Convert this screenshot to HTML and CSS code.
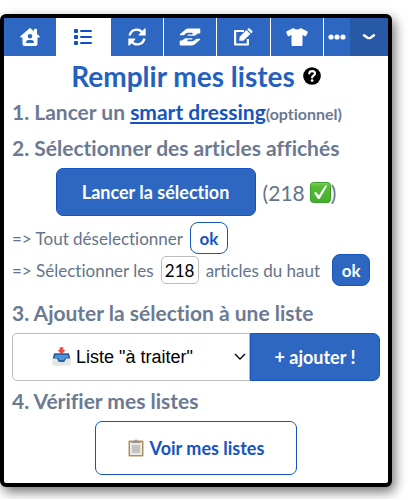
FILE: index.html
```html
<!DOCTYPE html>
<html lang="fr">
<head>
    <meta charset="UTF-8">
    <meta name="viewport" content="width=device-width, initial-scale=1.0">
    <title>Remplir mes listes</title>
    <link rel="stylesheet" href="styles.css">
</head>
<body>
    <main class="panel">

        <!-- Onglets -->
        <nav class="tabs">
            <button type="button" class="tab" aria-label="Accueil">
                <svg width="20" height="18" viewBox="0 0 20 18"><path fill="#fff" fill-rule="evenodd" d="M9.300 .4a1 1 0 0 1 1.400 0L14 3.200V1.500q0-.7.700-.7h1.600q.7 0 .7.700V6l2.600 2.300q.6.900-.5 1.200H17.500V16q0 2-2 2H4.500q-2 0-2-2V9.500H.900Q-.2 9.200.4 8.300zM10 6a2.300 2.300 0 1 0 0 4.600A2.300 2.300 0 0 0 10 6zM8.500 11.900Q6 12 6 15h8q0-3-2.500-3.100z"/></svg>
            </button>
            <button type="button" class="tab tab-active" aria-label="Listes">
                <svg width="20" height="16" viewBox="0 0 20 16"><g fill="#0d52c4"><rect x="1" y="0" width="4" height="4" rx="1"/><rect x="1" y="6" width="4" height="4" rx="1"/><rect x="1" y="12" width="4" height="4" rx="1"/><rect x="7" y="1" width="12" height="2" rx="1"/><rect x="7" y="7" width="12" height="2" rx="1"/><rect x="7" y="13" width="12" height="2" rx="1"/></g></svg>
            </button>
            <button type="button" class="tab" aria-label="Synchroniser">
                <svg width="18" height="18" viewBox="0 0 18 18"><g fill="none" stroke="#fff" stroke-width="2.400"><path d="M1.600 7.600C3 1.200 10.500-.4 14.400 4.600"/><path d="M16.400 10.400C15 16.800 7.500 18.400 3.600 13.400"/></g><path fill="#fff" d="M17.700.8v6.700h-6.700q-.8-.5-.2-1.100L16.500.6q.8-.5 1.200.2zM.3 17.200v-6.700H7q.8.500.2 1.100L1.500 17.400q-.8.500-1.200-.2z"/></svg>
            </button>
            <button type="button" class="tab" aria-label="Échanges">
                <svg width="22" height="18" viewBox="0 0 22 18"><path id="hand" fill="#fff" d="M20.500 5.600h-1.600l-2.200 1.700q-.6.400-1.500.4H9.200q-.7 0-.7-.6t.7-.6h3.600q.9-.1.900-.9t-.9-.9H8.800Q7.700 4.700 6.800 5.500L5 6.900q-.5.400-1.400.4H1.400Q.5 7.100.9 6.200L6.200 1.700Q7.700.5 9.600.5H20.500q.8 0 .8.800v3.500q0 .8-.8.800z"/><use href="#hand" transform="rotate(180 11 9)"/></svg>
            </button>
            <button type="button" class="tab" aria-label="Modifier">
                <svg width="20" height="18" viewBox="0 0 20 18"><path fill="none" stroke="#fff" stroke-width="2.200" stroke-linejoin="round" d="M11 3H2.100v13.500h12.800V11"/><path fill="#fff" d="M6.200 12.800l.5-4L13.400 2.100l3.900 3.900-6.900 6.700zM14.300 1.300l.8-.8q.8-.7 1.600 0l2.500 2.500q.7.800 0 1.600l-.9.800z"/></svg>
            </button>
            <button type="button" class="tab" aria-label="Articles">
                <svg width="22" height="18" viewBox="0 0 22 18"><path fill="#fff" d="M7.300 0q3.700 3.200 7.400 0l6.800 3.400q.5.300.3.900l-1.700 3.600q-.4.600-1 .3l-2.600-1.100V17q0 1-1 1h-9q-1 0-1-1V7.100L2.900 8.200q-.6.300-1-.3L.2 4.300q-.2-.6.300-.9z"/></svg>
            </button>
            <button type="button" class="tab tab-more" aria-label="Plus">
                <svg width="18" height="6" viewBox="0 0 18 6"><g fill="#fff"><circle cx="3" cy="3" r="2.600"/><circle cx="9" cy="3" r="2.600"/><circle cx="15" cy="3" r="2.600"/></g></svg>
            </button>
            <button type="button" class="tab tab-toggle" aria-label="Replier">
                <svg width="14" height="6" viewBox="0 0 14 6"><path fill="none" stroke="#fff" stroke-width="2.400" stroke-linecap="round" stroke-linejoin="round" d="M2 1.300l3.500 2.500q1.500.6 3 0L12 1.300"/></svg>
            </button>
        </nav>

        <div class="content">
            <h1 class="title">
                Remplir mes listes
                <svg width="18" height="18" viewBox="0 0 18 18"><circle cx="9" cy="9" r="8.800" fill="#000"/><path fill="none" stroke="#fff" stroke-width="2.200" stroke-linecap="round" d="M6.300 6.300C6.700 3.400 12 3.400 12 6.500c0 2-2.900 2.200-2.900 4"/><circle cx="9.100" cy="13.600" r="1.400" fill="#fff"/></svg>
            </h1>

            <h2 class="step">1. Lancer un <a href="#">smart dressing</a><small>(optionnel)</small></h2>

            <h2 class="step">2. Sélectionner des articles affichés</h2>
            <div class="launch">
                <button type="button" class="btn btn-large">Lancer la sélection</button>
                <span class="count">(218
                    <svg width="21" height="21" viewBox="0 0 21 21"><defs><linearGradient id="vert" x2="0" y2="1"><stop stop-color="#7fd35b"/><stop offset=".2" stop-color="#56bd35"/><stop offset="1" stop-color="#43ad2c"/></linearGradient></defs><rect x=".5" y=".5" width="20" height="20" rx="3" fill="url(#vert)" stroke="#399e28"/><path fill="#fff" d="M4 11l2-1.300 2.800 3.700L15.300 3.500l2 .3L9.600 17H8z"/></svg>)</span>
            </div>

            <div class="line">
                <span>=&gt; Tout déselectionner</span>
                <button type="button" class="btn btn-outline btn-ok">ok</button>
            </div>
            <div class="line">
                <label for="nombre">=&gt; Sélectionner les</label>
                <input type="text" id="nombre" class="number" value="218">
                <span class="line-end">articles du haut</span>
                <button type="button" class="btn btn-ok">ok</button>
            </div>

            <h2 class="step step-list"><label for="liste">3. Ajouter la sélection à une liste</label></h2>
            <div class="group">
                <div class="select-box">
                    <select id="liste" class="select">
                        <option>Liste "à traiter"</option>
                        <option>Liste "à vendre"</option>
                    </select>
                    <svg class="inbox" width="19" height="19" viewBox="0 0 19 19"><path fill="#e3e5e7" d="M3 8h13l2.700 4v5q0 1.700-1.700 1.700H2Q.3 18.700.3 17v-5z"/><path fill="#2c5fa8" d="M2 6.300h15l1.300 5.200h-4.100l-2 3.500H6.800l-2-3.500H.7z"/><path fill="#4d94dd" d="M3.500 8h12l.8 2.800h-3L11.500 13h-4l-1.800-2.200h-3z"/><path fill="#e34f43" d="M7.600.3h3.800v2.800h2L9.500 7.400 5.600 3.100h2z"/></svg>
                    <svg class="arrow" width="12" height="8" viewBox="0 0 12 8"><path fill="none" stroke="#000" stroke-width="1.300" d="M1 1l5 5 5-5"/></svg>
                </div>
                <button type="button" class="btn btn-add">+ ajouter !</button>
            </div>

            <h2 class="step step-check">4. Vérifier mes listes</h2>
            <button type="button" class="btn btn-outline btn-view">
                <svg width="16" height="18" viewBox="0 0 16 18"><rect x=".5" y="1.500" width="15" height="16" rx="1" fill="#b3905f"/><path fill="#e9e9e9" d="M2 3.500h12V16H2z"/><path fill="#c2c2c2" d="M4 6h8v8H4z"/><path fill="#929292" d="M4 4V2h2.500Q8-.8 9.500 2H12v2z"/></svg>
                Voir mes listes
            </button>
        </div>

    </main>
</body>
</html>
```
FILE: styles.css
```css
* {
    box-sizing: border-box;
}

body {
    margin: 0;
    padding: 14px 22px 12px 0;
    background-color: #fff;
    color: #64748b;
    font-family: Lato, sans-serif;
    font-size: 17px;
    font-variant-ligatures: none;
}

button,
input {
    font-family: inherit;
    font-variant-ligatures: inherit;
}

svg {
    flex: none;
}

.panel {
    border: 4px solid #000;
    border-radius: 6px;
    background-color: #fff;
    box-shadow: 3px 5px 12px rgba(0, 0, 0, 0.55);
}

/* Onglets */
.tabs {
    display: flex;
    height: 38px;
}

.tab {
    display: flex;
    flex: 1;
    align-items: center;
    justify-content: center;
    padding: 0;
    border: none;
    border-right: 1px solid #fff;
    background-color: #2d67c2;
    cursor: pointer;
}

.tab-active {
    background-color: #fff;
}

.tab-more {
    flex: 0 0 26px;
    border: none;
}

.tab-toggle {
    flex: 0 0 38px;
    border: none;
    background-color: #2859a6;
}

/* Contenu */
.content {
    padding: 0 8px 8px;
}

.title {
    display: flex;
    align-items: center;
    justify-content: center;
    gap: 8px;
    margin: 0;
    color: #255fc0;
    font-size: 28px;
    line-height: 40px;
}

.step {
    margin: 0 0 4px;
    color: #6b7a92;
    font-size: 21px;
    line-height: 32px;
}

.step a {
    color: #1554c0;
}

.step small {
    font-size: 16px;
    line-height: 1;
}

.launch {
    display: flex;
    align-items: center;
    justify-content: center;
    gap: 7px;
    margin-bottom: 6px;
}

.count {
    display: flex;
    align-items: center;
    font-size: 21px;
}

.count svg {
    margin-left: 5px;
}

.btn {
    border: 1px solid #1554c0;
    border-radius: 7px;
    background-color: #2d67c2;
    color: #fff;
    font-size: 18px;
    font-weight: bold;
    cursor: pointer;
}

.btn-large {
    width: 200px;
    height: 48px;
}

.btn-outline {
    background-color: #fff;
    color: #1554c0;
}

.btn-ok {
    width: 38px;
    height: 32px;
    padding: 0;
    border-radius: 8px;
    font-size: 17px;
}

.line {
    display: flex;
    align-items: center;
    gap: 7px;
}

.number {
    width: 38px;
    height: 28px;
    padding: 0;
    border: 1px solid #bbb;
    border-radius: 5px;
    color: #000;
    font-size: 17px;
    text-align: center;
}

.line-end {
    margin-right: 5px;
}

.step-list {
    margin-top: 11px;
}

.group {
    display: flex;
    height: 48px;
}

.select-box {
    position: relative;
    flex: 1;
}

.select {
    width: 100%;
    height: 100%;
    padding: 0 20px 0 63px;
    border: 1px solid #bbb;
    border-radius: 5px 0 0 5px;
    background-color: #fff;
    color: #000;
    font-family: "Liberation Sans", sans-serif;
    font-size: 18px;
    appearance: none;
}

/* Pictogrammes posés sur la liste déroulante */
.inbox,
.arrow {
    position: absolute;
    pointer-events: none;
}

.inbox {
    top: 14px;
    left: 40px;
}

.arrow {
    top: 20px;
    right: 4px;
}

.btn-add {
    width: 130px;
    border-radius: 0 7px 7px 0;
}

.step-check {
    margin-top: 4px;
}

.btn-view {
    display: flex;
    align-items: center;
    justify-content: center;
    gap: 6px;
    width: 202px;
    height: 54px;
    margin: 0 auto;
}
```
